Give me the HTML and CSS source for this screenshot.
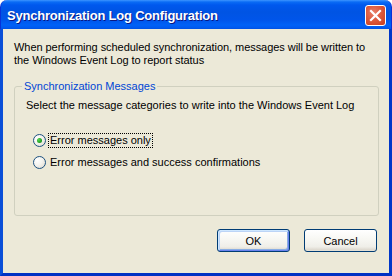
FILE: index.html
```html
<!DOCTYPE html>
<html>
<head>
<meta charset="utf-8">
<link rel="stylesheet" href="styles.css">
</head>
<body>
<div class="window">
  <div class="titlebar">
    <span class="title">Synchronization Log Configuration</span>
    <span class="close" aria-label="Close">
      <svg width="21" height="21" viewBox="0 0 21 21">
        <path d="M6 6 L15 15 M15 6 L6 15" stroke="#fff" stroke-width="2.2" stroke-linecap="square"/>
      </svg>
    </span>
  </div>
  <div class="client">
    <p class="intro">When performing scheduled synchronization, messages will be written to the Windows Event Log to report status</p>
    <fieldset class="group">
      <legend class="legend">Synchronization Messages</legend>
      <p class="hint">Select the message categories to write into the Windows Event Log</p>
      <div class="options">
        <label class="option">
          <span class="radio checked"><span class="dot"></span></span>
          <span class="label focus">Error messages only</span>
        </label>
        <label class="option">
          <span class="radio"></span>
          <span class="label">Error messages and success confirmations</span>
        </label>
      </div>
    </fieldset>
    <div class="buttons">
      <button class="btn default">OK</button>
      <button class="btn">Cancel</button>
    </div>
  </div>
</div>
</body>
</html>
```
FILE: styles.css
```css
html, body {
  margin: 0;
  padding: 0;
  background: #fff;
}
.window {
  width: 392px;
  height: 276px;
  display: flex;
  flex-direction: column;
  font-family: "Liberation Sans", Arial, sans-serif;
  font-size: 11px;
  color: #000;
}
.titlebar {
  height: 29px;
  box-sizing: border-box;
  border-radius: 7px 7px 0 0;
  background: linear-gradient(#3d95ff 0px, #0a6cf5 2px, #0058ee 5px, #0054e3 12px, #0055ea 20px, #0062f7 25px, #0058ee 28px, #0050e0 29px);
  display: flex;
  align-items: center;
  padding: 0 5px 0 6px;
  border-left: 1px solid #0831d9;
  border-right: 1px solid #0831d9;
}
.title {
  flex: 1;
  color: #fff;
  font-family: "Liberation Sans", Arial, sans-serif;
  font-weight: bold;
  font-size: 13px;
  letter-spacing: -0.2px;
  text-shadow: 1px 1px #0a1883;
  padding-top: 1px;
}
.close {
  width: 21px;
  height: 21px;
  box-sizing: border-box;
  border: 1px solid #fff;
  border-radius: 3px;
  background: radial-gradient(circle at 40% 35%, #e8806a 0, #dd5a3e 45%, #c83c1c 100%);
  display: flex;
  margin-top: 2px;
}
.close svg {
  margin: -1px;
}
.client {
  flex: 1;
  background: #ece9d8;
  border: 3px solid #0055e5;
  border-top: none;
  border-left-color: #0a4fd8;
  border-bottom-color: #0031c4;
  border-right-color: #0036c8;
  padding: 12px 10px 0 11px;
  display: flex;
  flex-direction: column;
}
.intro {
  margin: 0;
  line-height: 13px;
  letter-spacing: -0.05px;
}
.group {
  margin: 13px 0 0 0;
  padding: 0 0 0 11px;
  border: 1px solid #d0d0bf;
  border-radius: 3px;
  height: 136px;
  box-sizing: border-box;
  min-width: 0;
}
.legend {
  color: #0046d5;
  padding: 0 2px;
  margin-left: -4px;
  line-height: 13px;
}
.hint {
  margin: 6px 0 0 0;
  line-height: 13px;
}
.options {
  display: flex;
  flex-direction: column;
  gap: 7px;
  margin-top: 21px;
  padding-left: 7px;
}
.option {
  display: flex;
  align-items: center;
  height: 15px;
  gap: 2px;
}
.radio {
  width: 13px;
  height: 13px;
  box-sizing: border-box;
  border: 1px solid #1c5180;
  border-radius: 50%;
  background: radial-gradient(circle at 30% 30%, #ffffff 0, #f4f3ee 45%, #dcd7cb 100%);
  display: flex;
  align-items: center;
  justify-content: center;
}
.dot {
  width: 5px;
  height: 5px;
  border-radius: 50%;
  background: radial-gradient(circle at 35% 35%, #55d751 0, #21a121 60%, #1a801a 100%);
}
.label {
  line-height: 13px;
  padding: 0 1px;
  border: 1px solid transparent;
}
.label.focus {
  border: 1px dotted #000;
}
.buttons {
  display: flex;
  justify-content: flex-end;
  gap: 14px;
  margin-top: 13px;
  padding-right: 2px;
}
.btn {
  width: 73px;
  height: 23px;
  box-sizing: border-box;
  font-family: "Liberation Sans", Arial, sans-serif;
  font-size: 11px;
  color: #000;
  border: 1px solid #003c74;
  border-radius: 3px;
  background: linear-gradient(#ffffff 0, #f8f8f4 40%, #efeee8 80%, #d6d0c5 100%);
  box-shadow: inset 0 -1px #e3e0d6;
  padding: 0;
}
.btn.default {
  box-shadow: inset 1px 1px #cee7ff, inset -1px -1px #6982ee, inset 2px 2px #bcd4f6, inset -2px -2px #89ade4;
}
```
